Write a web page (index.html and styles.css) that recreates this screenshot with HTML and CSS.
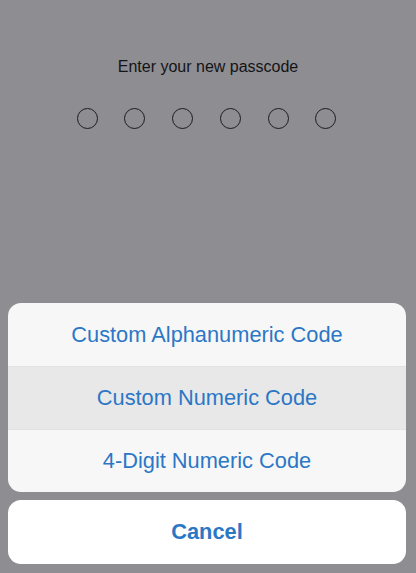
FILE: index.html
```html
<!DOCTYPE html>
<html>
<head>
<meta charset="utf-8">
<link rel="stylesheet" href="styles.css">
</head>
<body>
<div class="screen">
  <div class="prompt">Enter your new passcode</div>
  <div class="dots">
    <span class="dot"></span><span class="dot"></span><span class="dot"></span>
    <span class="dot"></span><span class="dot"></span><span class="dot"></span>
  </div>
  <div class="options-link">Passcode Options</div>

  <div class="sheet">
    <div class="group">
      <div class="action">Custom Alphanumeric Code</div>
      <div class="action pressed">Custom Numeric Code</div>
      <div class="action">4-Digit Numeric Code</div>
    </div>
    <div class="cancel">Cancel</div>
  </div>
</div>
</body>
</html>
```
FILE: styles.css
```css
html, body {
  margin: 0;
  padding: 0;
}
body {
  background: #8e8d92;
  font-family: "Liberation Sans", Arial, sans-serif;
}
.screen {
  position: relative;
  width: 416px;
  height: 573px;
  overflow: hidden;
  display: flex;
  flex-direction: column;
  align-items: center;
}
.prompt {
  margin-top: 58px;
  font-size: 16px;
  line-height: 18px;
  color: #141416;
}
.dots {
  margin-top: 32px;
  margin-left: -3px;
  display: flex;
  gap: 26.8px;
}
.dot {
  width: 19px;
  height: 19px;
  border: 1.3px solid #1c1c1e;
  border-radius: 50%;
}
.options-link {
  margin-top: 172px;
  font-size: 16px;
  color: #5a5a5e;
}
.sheet {
  position: absolute;
  left: 8px;
  right: 10px;
  bottom: 9px;
  display: flex;
  flex-direction: column;
  gap: 8px;
}
.group {
  background: #f7f7f8;
  border-radius: 13px;
  overflow: hidden;
}
.action {
  height: 63px;
  display: flex;
  align-items: center;
  justify-content: center;
  font-size: 21.8px;
  color: #2b77c5;
  border-top: 1px solid #e2e2e4;
  box-sizing: border-box;
}
.action:first-child {
  border-top: none;
}
.action.pressed {
  background: #e8e8e9;
}
.cancel {
  height: 64px;
  background: #ffffff;
  border-radius: 13px;
  display: flex;
  align-items: center;
  justify-content: center;
  font-size: 21.8px;
  font-weight: bold;
  color: #2b77c5;
}
```
